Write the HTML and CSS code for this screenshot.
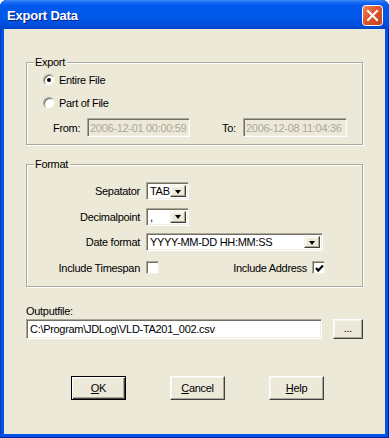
FILE: index.html
```html
<html>
<head>
<link rel="stylesheet" href="styles.css">
<title>Export Data</title>
</head>
<body>
<div class="window">
    <div class="titlebar">
        <span class="title">Export Data</span>
        <span class="close">
            <svg width="21" height="21" viewBox="0 0 21 21">
                <defs>
                    <linearGradient id="cg" x1="0" y1="0" x2="1" y2="1">
                        <stop offset="0" stop-color="#F08A64"/>
                        <stop offset="0.45" stop-color="#E0552B"/>
                        <stop offset="1" stop-color="#C2411A"/>
                    </linearGradient>
                </defs>
                <rect x="0.5" y="0.5" width="20" height="20" rx="3" fill="url(#cg)" stroke="#fff"/>
                <path d="M6 6 L15 15 M15 6 L6 15" stroke="#fff" stroke-width="2" stroke-linecap="square"/>
            </svg>
        </span>
    </div>
    <div class="client">
        <div class="group export">
            <span class="legend">Export</span>
            <div class="radio-row"><span class="radio checked"></span>Entire File</div>
            <div class="radio-row second"><span class="radio"></span>Part of File</div>
            <div class="range-row">
                <span class="from-lbl">From:</span>
                <span class="field disabled from">2006-12-01 00:00:59</span>
                <span class="to-lbl">To:</span>
                <span class="field disabled to">2006-12-08 11:04:36</span>
            </div>
        </div>

        <div class="group format">
            <span class="legend">Format</span>
            <div class="format-grid">
                <span class="lbl">Sepatator</span>
                <span class="combo small"><span class="combo-text">TAB</span><span class="combo-btn"><i class="arrow"></i></span></span>

                <span class="lbl">Decimalpoint</span>
                <span class="combo small"><span class="combo-text">,</span><span class="combo-btn"><i class="arrow"></i></span></span>

                <span class="lbl">Date format</span>
                <span class="combo wide"><span class="combo-text">YYYY-MM-DD HH:MM:SS</span><span class="combo-btn"><i class="arrow"></i></span></span>

                <span class="lbl">Include Timespan</span>
                <span class="check-row">
                    <span class="checkbox"></span>
                    <span class="addr">Include Address
                        <span class="checkbox">
                            <svg width="9" height="9" viewBox="0 0 9 9"><path d="M1 4 L3.2 6.5 L8 1.5" fill="none" stroke="#000" stroke-width="2.2"/></svg>
                        </span>
                    </span>
                </span>
            </div>
        </div>

        <div class="output">
            <div class="output-lbl">Outputfile:</div>
            <div class="output-row">
                <span class="field path">C:\Program\JDLog\VLD-TA201_002.csv</span>
                <span class="button browse">...</span>
            </div>
        </div>

        <div class="buttons">
            <span class="button default"><u>O</u>K</span>
            <span class="button"><u>C</u>ancel</span>
            <span class="button"><u>H</u>elp</span>
        </div>
    </div>
</div>
</body>
</html>
```

FILE: styles.css
```css
html, body {margin: 0; padding: 0; background: #fff;}
body {font-family: "Liberation Sans", Arial, sans-serif; font-size: 11px; color: #000;}

.window {
    width: 389px;
    height: 438px;
    display: flex;
    flex-direction: column;
    background: #0053E4;
    border-radius: 7px 7px 0 0;
    box-shadow: inset 1px 0 #0B35C4, inset -1px 0 #0020A8, inset 0 -1px #001C98;
    overflow: hidden;
}

.titlebar {
    height: 29px;
    display: flex;
    align-items: center;
    justify-content: space-between;
    padding: 0 6px 0 7px;
    background: linear-gradient(to bottom, #3E8EF8 0, #1C6DF2 2px, #0259EE 5px, #0057EA 18px, #004DDC 25px, #0043C8 29px);
    border-radius: 7px 7px 0 0;
}

.title {
    color: #fff;
    font-weight: bold;
    font-size: 13px;
    letter-spacing: -0.2px;
    text-shadow: 1px 1px #0A1E8C;
    padding-top: 1px;
}

.close {display: flex; margin-top: 1px;}

.client {
    flex: 1;
    margin: 0 4px 4px 4px;
    background: #ECE9D8;
    padding: 33px 22px 0 22px;
    display: flex;
    flex-direction: column;
    letter-spacing: -0.3px;
}

/* etched group box */
.group {
    position: relative;
    border: 1px solid #ACA899;
    box-shadow: 1px 1px #fff, inset 1px 1px #fff;
}

.legend {
    position: absolute;
    top: -7px;
    left: 7px;
    padding: 0 2px 0 1px;
    background: #ECE9D8;
    line-height: 13px;
}

.export {height: 83px; padding: 10px 0 0 16px; box-sizing: border-box;}

.radio-row {display: flex; align-items: center; height: 14px;}
.radio-row.second {margin-top: 9px;}

.radio {
    width: 12px;
    height: 12px;
    box-sizing: border-box;
    border-radius: 50%;
    background: #fff;
    border: 1px solid;
    border-color: #ACA899 #F1EFE2 #F1EFE2 #ACA899;
    box-shadow: inset 1px 1px #716F64;
    margin-right: 4px;
    display: flex;
    align-items: center;
    justify-content: center;
}
.radio.checked::after {
    content: "";
    width: 4px;
    height: 4px;
    border-radius: 50%;
    background: #000;
}

.range-row {display: flex; align-items: center; margin-top: 8px; padding-left: 10px;}
.from-lbl {width: 34px;}
.to-lbl {width: 21px; margin-left: 32px;}

.field {
    height: 19px;
    box-sizing: border-box;
    background: #fff;
    border: 1px solid;
    border-color: #ACA899 #fff #fff #ACA899;
    box-shadow: inset 1px 1px #716F64, inset -1px -1px #F1EFE2;
    padding: 0 2px;
    display: flex;
    align-items: center;
    white-space: nowrap;
    overflow: hidden;
}
.field.disabled {background: #ECE9D8; color: #ACA899;}
.field.from {width: 103px;}
.field.to {width: 104px;}

.format {margin-top: 19px; padding: 17px 0 9px 0;}

.format-grid {
    display: grid;
    grid-template-columns: 113px 179px;
    column-gap: 6px;
    row-gap: 7.5px;
    grid-auto-rows: 18px;
}
.lbl {text-align: right; align-self: center;}

.combo {
    display: flex;
    height: 18px;
    box-sizing: border-box;
    background: #fff;
    border: 1px solid;
    border-color: #ACA899 #fff #fff #ACA899;
    box-shadow: inset 1px 1px #716F64, inset -1px -1px #F1EFE2;
    padding: 2px;
}
.combo.small {width: 43px;}
.combo.wide {width: 177px;}
.combo-text {flex: 1; display: flex; align-items: center; padding-left: 1px; white-space: nowrap; overflow: hidden; line-height: 12px;}
.combo-btn {
    width: 16px;
    flex: none;
    box-sizing: border-box;
    background: #ECE9D8;
    border: 1px solid;
    border-color: #F1EFE2 #404040 #404040 #F1EFE2;
    box-shadow: inset -1px -1px #ACA899, inset 1px 1px #fff;
    display: flex;
    align-items: center;
    justify-content: center;
}
.arrow {
    width: 0;
    height: 0;
    border-left: 3.5px solid transparent;
    border-right: 3.5px solid transparent;
    border-top: 4px solid #000;
    margin-top: 1px;
}

.check-row {display: flex; align-items: center; justify-content: space-between;}
.addr {display: flex; align-items: center; gap: 5px;}
.checkbox {
    width: 13px;
    height: 13px;
    box-sizing: border-box;
    background: #fff;
    border: 1px solid;
    border-color: #ACA899 #F1EFE2 #F1EFE2 #ACA899;
    box-shadow: inset 1px 1px #716F64;
    display: flex;
    align-items: center;
    justify-content: center;
    padding: 1px 0 0 1px;
}

.output {margin-top: 18px;}
.output-lbl {line-height: 13px; height: 13px;}
.output-row {display: flex; align-items: center; gap: 11px; margin-top: 1px;}
.field.path {width: 296px; height: 20px; padding-left: 3px;}

.button {
    height: 23px;
    box-sizing: border-box;
    background: #ECE9D8;
    border: 1px solid;
    border-color: #fff #404040 #404040 #fff;
    box-shadow: inset -1px -1px #ACA899, inset 1px 1px #F7F6EF;
    display: flex;
    align-items: center;
    justify-content: center;
}
.browse {width: 30px; height: 20px; padding-bottom: 2px;}

.buttons {display: flex; gap: 44px; padding-left: 45px; margin-top: 37px;}
.buttons .button {width: 55px; height: 24px;}
.buttons .button.default {
    border: 1px solid #000;
    box-shadow: inset 1px 1px #fff, inset -1px -1px #404040, inset -2px -2px #ACA899;
}
u {text-decoration: underline; text-underline-offset: 1px;}
```
